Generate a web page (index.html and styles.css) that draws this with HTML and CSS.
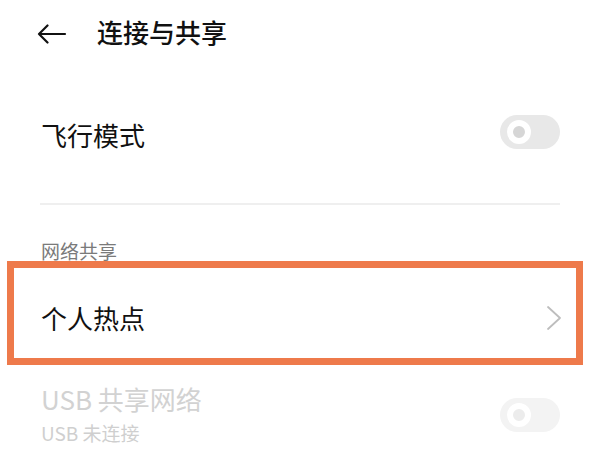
FILE: index.html
```html
<!DOCTYPE html>
<html lang="zh-CN">
<head>
<meta charset="utf-8">
<title>连接与共享</title>
<link rel="stylesheet" href="styles.css">
</head>
<body>
<div class="page">
  <header class="header">
    <svg class="back" width="30" height="20" viewBox="0 0 30 20">
      <path d="M2 10 H28 M10.5 1.5 L2 10 L10.5 18.5" fill="none" stroke="#111" stroke-width="2.2" stroke-linecap="round" stroke-linejoin="round"/>
    </svg>
    <h1 class="title">连接与共享</h1>
  </header>

  <div class="row row-plane">
    <span class="row-title">飞行模式</span>
    <div class="toggle"><span class="knob"></span></div>
  </div>

  <div class="divider"></div>

  <div class="section-label">网络共享</div>

  <div class="highlight">
    <div class="row-hotspot">
      <span class="row-title">个人热点</span>
      <svg class="chevron" width="16" height="26" viewBox="0 0 16 26">
        <path d="M2 2 L14 13 L2 24" fill="none" stroke="#bdbdbd" stroke-width="1.8" stroke-linecap="round" stroke-linejoin="round"/>
      </svg>
    </div>
  </div>

  <div class="row row-usb">
    <div class="usb-text">
      <span class="usb-title">USB 共享网络</span>
      <span class="usb-sub">USB 未连接</span>
    </div>
    <div class="toggle toggle-disabled"><span class="knob"></span></div>
  </div>
</div>
</body>
</html>
```

FILE: styles.css
```css
html, body {
  margin: 0;
  padding: 0;
  background: #ffffff;
}

body {
  font-family: "Noto Sans CJK SC", "Noto Sans", sans-serif;
  color: #111111;
  width: 600px;
  height: 450px;
  overflow: hidden;
}

.page {
  display: flex;
  flex-direction: column;
}

.header {
  height: 64px;
  display: flex;
  align-items: center;
  padding-left: 37px;
}

.back {
  display: block;
  margin-top: 3px;
}

.title {
  margin: 0 0 0 30px;
  font-size: 26px;
  font-weight: 500;
  line-height: 30px;
  color: #111;
}

.row {
  display: flex;
  align-items: center;
  justify-content: space-between;
  padding: 0 40px 0 41px;
}

.row-plane {
  margin-top: 36px;
  height: 70px;
}

.row-title {
  font-size: 26px;
  line-height: 32px;
  color: #111;
}

.toggle {
  width: 60px;
  height: 34px;
  border-radius: 17px;
  background: #e8e8e8;
  display: flex;
  align-items: center;
  box-sizing: border-box;
  padding-left: 7px;
  margin-top: -6px;
}

.knob {
  width: 12px;
  height: 12px;
  border-radius: 50%;
  background: #d6d6d6;
  border: 6px solid #ffffff;
}

.divider {
  margin: 33px 40px 0 40px;
  height: 2px;
  background: #efefef;
}

.section-label {
  margin-top: 36px;
  padding-left: 41px;
  font-size: 19px;
  line-height: 20px;
  height: 20px;
  color: #7a7a7a;
}

.highlight {
  margin: 0 17px 0 7px;
  height: 104px;
  border: 7px solid #ee7a4b;
  box-sizing: border-box;
  display: flex;
  flex-direction: column;
  justify-content: center;
}

.row-hotspot {
  display: flex;
  align-items: center;
  justify-content: space-between;
  padding: 10px 14px 0 27px;
}

.chevron {
  display: block;
}

.row-usb {
  margin-top: 17px;
}

.usb-text {
  display: flex;
  flex-direction: column;
}

.usb-title {
  font-size: 26px;
  line-height: 34px;
  color: #d2d2d2;
}

.usb-sub {
  margin-top: 5px;
  font-size: 19px;
  line-height: 24px;
  color: #cfcfcf;
}

.toggle-disabled {
  background: #f3f3f3;
  margin-top: 2px;
}

.toggle-disabled .knob {
  background: #ececec;
  border-color: #ffffff;
}
```
